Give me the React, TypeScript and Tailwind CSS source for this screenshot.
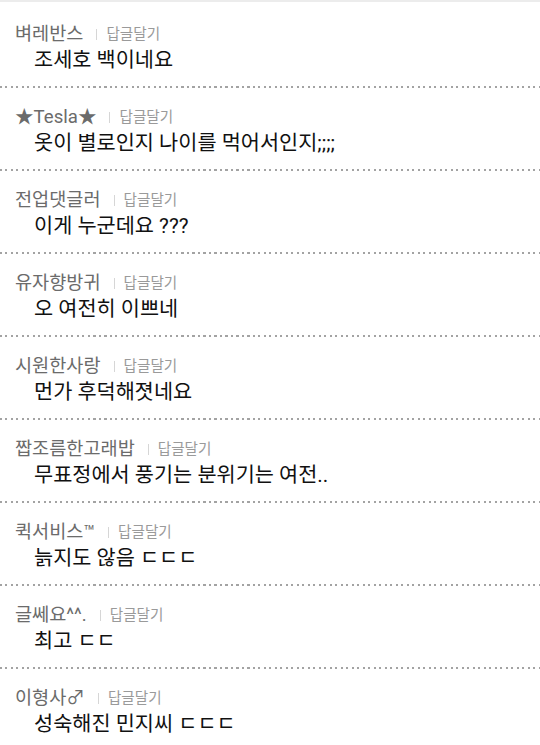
import React from 'react';

const comments = [
  { name: '벼레반스', text: '조세호 백이네요' },
  { name: '★Tesla★', text: '옷이 별로인지 나이를 먹어서인지;;;;' },
  { name: '전업댓글러', text: '이게 누군데요 ???' },
  { name: '유자향방귀', text: '오 여전히 이쁘네' },
  { name: '시원한사랑', text: '먼가 후덕해졋네요' },
  { name: '짭조름한고래밥', text: '무표정에서 풍기는 분위기는 여전..' },
  { name: '퀵서비스™', text: '늙지도 않음 ㄷㄷㄷ' },
  { name: '글쎄요^^.', text: '최고 ㄷㄷ' },
  { name: '이형사♂', text: '성숙해진 민지씨 ㄷㄷㄷ' },
];

const Dots: React.FC = () => (
  <div className="h-[2px] w-full bg-[repeating-linear-gradient(90deg,#a3a3a3_0px,#a3a3a3_2px,transparent_2px,transparent_5.5px)]" />
);

export default function App() {
  return (
    <div className="w-[540px] min-h-[745px] bg-white font-['Roboto','Noto_Sans_CJK_KR',sans-serif]">
      <div className="h-[2px] bg-[#ececec]" />
      {comments.map((c, i) => (
        <div key={i}>
          {i > 0 && <Dots />}
          <div className={`${i === 0 ? 'pt-[21px]' : 'pt-[18px]'} pb-[13px] pl-[15px]`}>
            <div className="flex items-center h-[23px] leading-[23px]">
              <span className="text-[18.6px] text-[#6b6b6b]">{c.name}</span>
              <span className="ml-[13px] mr-[9px] h-[11px] w-px bg-[#d6d6d6]" />
              <span className="text-[14.6px] text-[#9a9a9a]">답글달기</span>
            </div>
            <div className="mt-px pl-[19px] text-[20.8px] leading-[26px] text-[#111]">{c.text}</div>
          </div>
        </div>
      ))}
    </div>
  );
}
